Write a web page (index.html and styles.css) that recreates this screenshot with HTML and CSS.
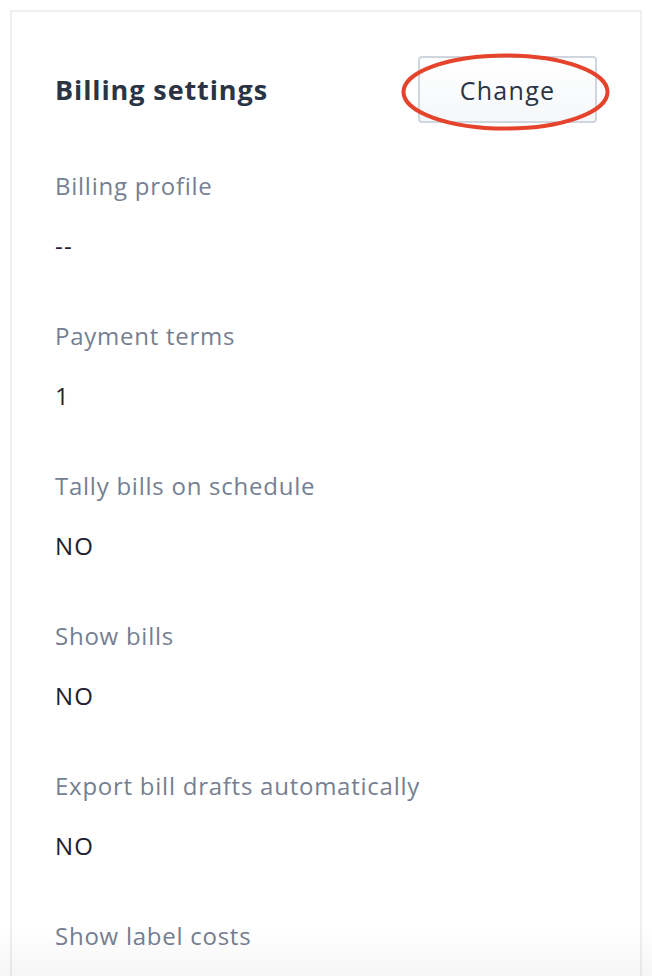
FILE: index.html
```html
<!DOCTYPE html>
<html>
<head>
<meta charset="utf-8">
<link rel="stylesheet" href="styles.css">
</head>
<body>
<div class="card">
  <div class="header">
    <h2 class="title">Billing settings</h2>
    <div class="btn-wrap">
      <button class="btn">Change</button>
      <svg class="circle" viewBox="0 0 209 78" width="209" height="78"><ellipse cx="104.5" cy="39" rx="102" ry="36.5" fill="none" stroke="#e5432c" stroke-width="4"/></svg>
    </div>
  </div>
  <dl class="fields">
    <div class="field"><dt>Billing profile</dt><dd>--</dd></div>
    <div class="field"><dt>Payment terms</dt><dd>1</dd></div>
    <div class="field"><dt>Tally bills on schedule</dt><dd>NO</dd></div>
    <div class="field"><dt>Show bills</dt><dd>NO</dd></div>
    <div class="field"><dt>Export bill drafts automatically</dt><dd>NO</dd></div>
    <div class="field"><dt>Show label costs</dt></div>
  </dl>
</div>
<div class="fade"></div>
</body>
</html>
```
FILE: styles.css
```css
html, body {
  margin: 0;
  padding: 0;
  background: #ffffff;
  font-family: "Open Sans", Lato, "Liberation Sans", sans-serif;
}
body {
  padding: 10px 10px 0 10px;
  height: 966px;
  overflow: hidden;
}
.card {
  border: 2px solid #efefef;
  border-bottom: none;
  background: #fff;
  padding: 44px 43px 0 43px;
  height: 1200px;
}
.header {
  display: flex;
  justify-content: space-between;
  align-items: center;
  height: 67px;
}
.title {
  margin: 0;
  font-size: 27px;
  font-weight: 700;
  letter-spacing: 0.9px;
  color: #2a3444;
}
.btn-wrap {
  position: relative;
  width: 179px;
  height: 67px;
}
.btn {
  width: 179px;
  height: 67px;
  border: 2px solid #d0d6de;
  border-radius: 4px;
  background: linear-gradient(#ffffff, #f5f7f9);
  font-family: inherit;
  font-size: 25px;
  letter-spacing: 1.3px;
  color: #2a3444;
  padding: 0;
}
.circle {
  position: absolute;
  left: -17px;
  top: -3px;
}
.fields {
  margin: 48px 0 0 0;
  display: flex;
  flex-direction: column;
  gap: 60px;
}
.field {
  display: flex;
  flex-direction: column;
  gap: 30px;
}
dt {
  font-size: 24px;
  line-height: 30px;
  letter-spacing: 0.75px;
  color: #767f91;
}
dd {
  margin: 0;
  font-size: 24px;
  line-height: 30px;
  letter-spacing: 1.2px;
  color: #1c2230;
}
.fade {
  position: fixed;
  left: 0;
  right: 0;
  bottom: 0;
  height: 50px;
  background: linear-gradient(rgba(0,0,0,0), rgba(0,0,0,0.035));
  pointer-events: none;
}
```
